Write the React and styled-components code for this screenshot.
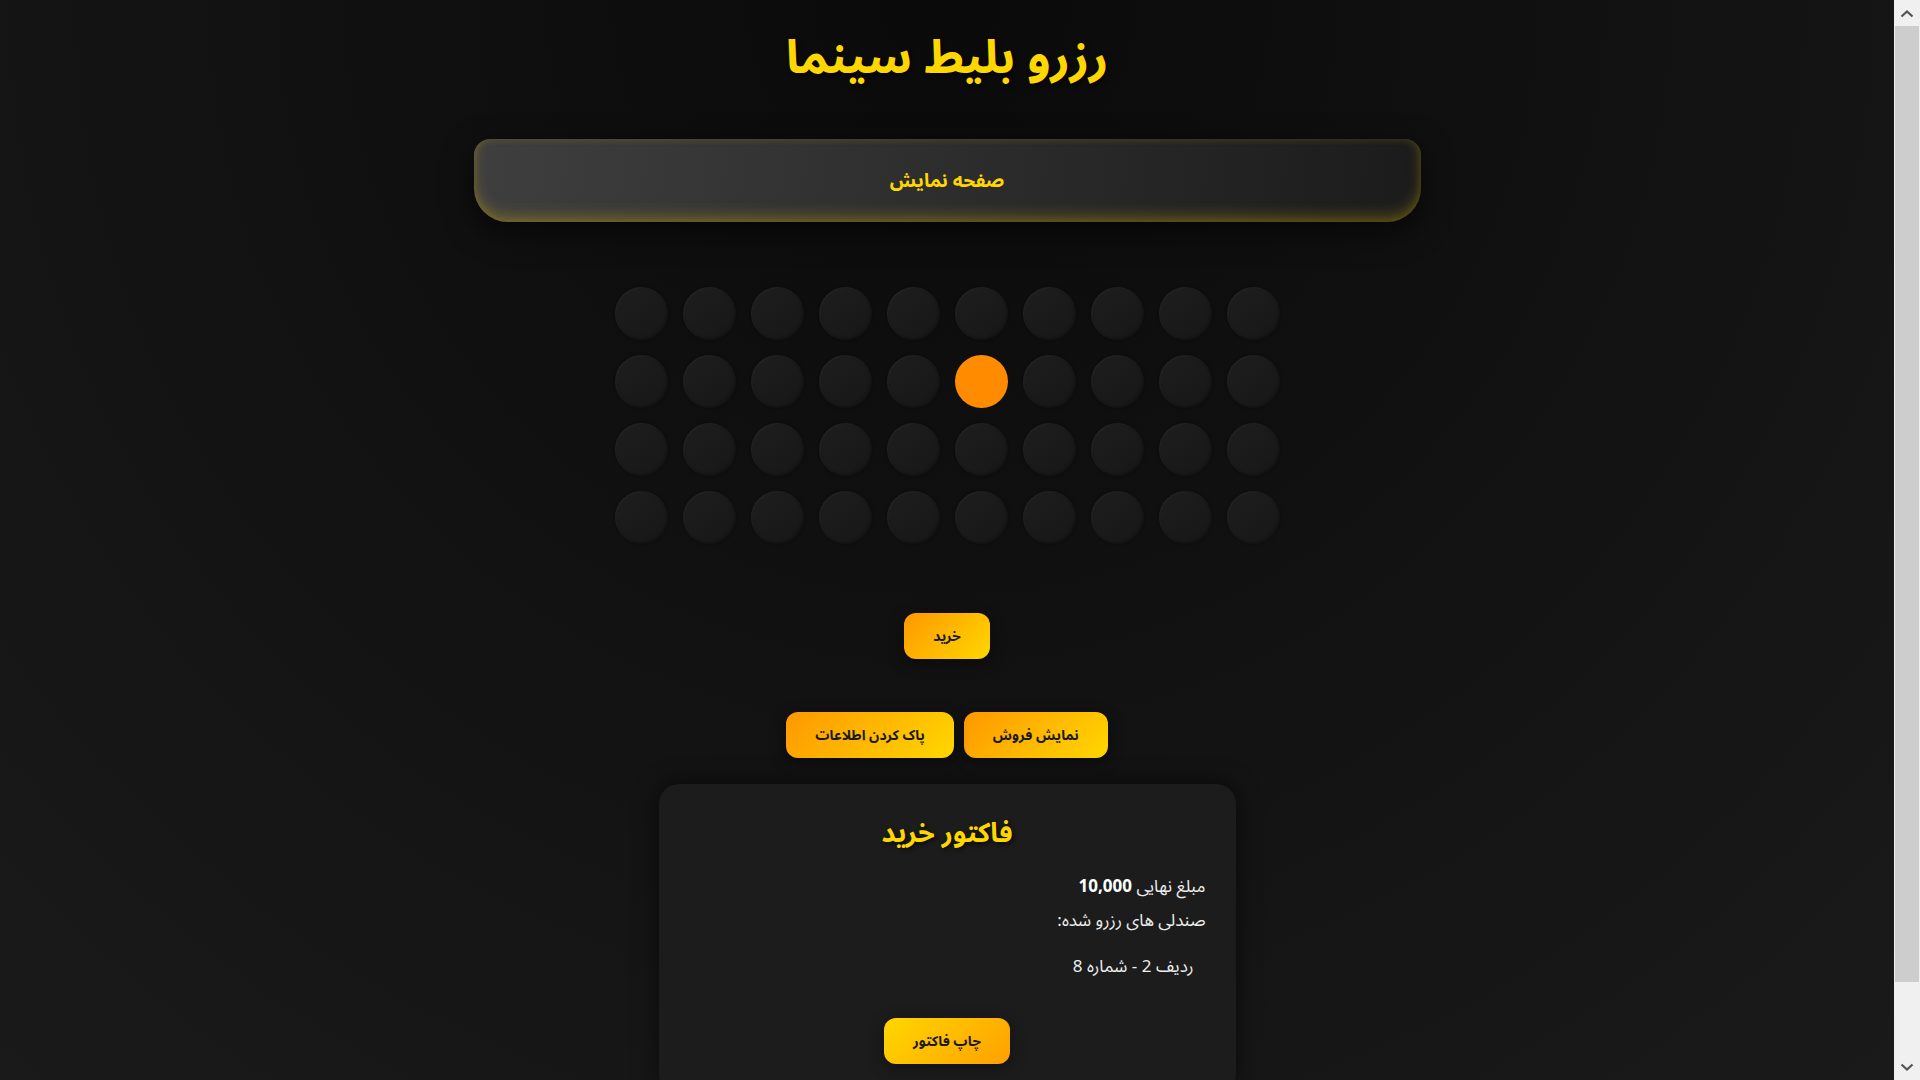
import React from 'react';
import styled, { createGlobalStyle } from 'styled-components';

const GlobalStyle = createGlobalStyle`
  html, body {
    margin: 0;
    padding: 0;
  }
  body {
    min-height: 100vh;
    background: radial-gradient(circle at 49% 0%, #0a0a0a 0%, #1b1b1b 100%);
    background-color: #1b1b1b;
    font-family: "Noto Sans Arabic", "Vazirmatn", "DejaVu Sans", sans-serif;
    color: #eeeeee;
    direction: rtl;
  }
`;

const Page = styled.div`
  margin-right: 26px;
  display: flex;
  flex-direction: column;
  align-items: center;
  padding: 29px 0 70px;
`;

const Title = styled.h1`
  margin: 0;
  font-size: 47px;
  line-height: 58px;
  font-weight: 700;
  color: #ffd700;
  text-shadow: 2px 2px 4px rgba(0, 0, 0, 0.6);
`;

const Screen = styled.div`
  width: 50%;
  height: 83px;
  margin-top: 52px;
  display: flex;
  align-items: center;
  justify-content: center;
  border-radius: 16px 16px 34px 34px;
  background: linear-gradient(100deg, #3f3f3f 0%, #2d2d2d 50%, #1b1b1b 100%);
  box-shadow:
    inset 0 -7px 14px rgba(255, 215, 0, 0.22),
    inset 0 0 9px rgba(255, 215, 0, 0.14),
    0 10px 30px rgba(0, 0, 0, 0.6);
  color: #ffd700;
  font-size: 19px;
  font-weight: 700;
`;

const SeatGrid = styled.div`
  margin-top: 65px;
  display: grid;
  grid-template-columns: repeat(10, 53px);
  grid-auto-rows: 53px;
  gap: 15px;
`;

const Seat = styled.div`
  border-radius: 50%;
  background: ${(p) => (p.$selected ? '#ff8c00' : 'linear-gradient(145deg, #1e1e1e, #171717)')};
  box-shadow: ${(p) =>
    p.$selected
      ? 'none'
      : 'inset 1px 1px 2px rgba(255, 255, 255, 0.04), inset -1px -1px 3px rgba(0, 0, 0, 0.35), 0 0 3px rgba(0, 0, 0, 0.3)'};
`;

const Button = styled.button`
  height: 46px;
  padding: 0 29px;
  border: none;
  border-radius: 12px;
  font-family: inherit;
  font-size: 14px;
  font-weight: 700;
  color: #1a1a1a;
  background: ${(p) =>
    p.$reverse
      ? 'linear-gradient(135deg, #ffd700 0%, #ffa000 100%)'
      : 'linear-gradient(135deg, #ff9800 0%, #ffd700 100%)'};
  box-shadow: 0 4px 15px rgba(0, 0, 0, 0.45);
  cursor: pointer;
`;

const BuyRow = styled.div`
  margin-top: 69px;
`;

const ActionRow = styled.div`
  margin-top: 53px;
  display: flex;
  gap: 10px;
`;

const Invoice = styled.div`
  width: 577px;
  box-sizing: border-box;
  margin-top: 26px;
  padding: 30px;
  border-radius: 20px;
  background: #1c1c1c;
  box-shadow: 0 0 25px rgba(0, 0, 0, 0.55);
  display: flex;
  flex-direction: column;
`;

const InvoiceTitle = styled.h2`
  margin: 0;
  text-align: center;
  font-size: 27px;
  line-height: 40px;
  font-weight: 700;
  color: #ffd700;
  text-shadow: 2px 2px 4px rgba(0, 0, 0, 0.6);
`;

const Line = styled.p`
  margin: ${(p) => p.$gap || 0}px 0 0;
  font-size: 17px;
  line-height: 28px;
  color: #eeeeee;

  strong {
    font-weight: 700;
    color: #ffffff;
  }
`;

const SeatList = styled.ul`
  list-style: none;
  margin: 18px 0 0;
  padding: 0 12px 0 0;
`;

const SeatItem = styled.li`
  font-size: 17px;
  line-height: 28px;
  color: #eeeeee;
`;

const PrintRow = styled.div`
  margin-top: 37px;
  display: flex;
  justify-content: center;
`;

// the window's scroll bar as it shows in the picture
const ScrollBar = styled.div`
  position: fixed;
  top: 0;
  right: 0;
  bottom: 0;
  width: 26px;
  background: #f0f0f0;
  display: flex;
  flex-direction: column;
  direction: ltr;
`;

const ScrollArrow = styled.div`
  height: 26px;
  flex: none;
  display: flex;
  align-items: center;
  justify-content: center;
`;

const ScrollTrack = styled.div`
  flex: 1;
  display: flex;
  flex-direction: column;
`;

const ScrollThumb = styled.div`
  height: 93%;
  margin: 0 1px;
  background: #cdcdcd;
`;

const Chevron = ({ up }) => (
  <svg width="14" height="9" viewBox="0 0 14 9">
    <path
      d={up ? 'M1.5 7.5 L7 2.5 L12.5 7.5' : 'M1.5 1.5 L7 6.5 L12.5 1.5'}
      fill="none"
      stroke="#555"
      strokeWidth="2.2"
    />
  </svg>
);

const ROWS = 4;
const COLS = 10;
// grid flows right to left, so the 6th seat from the left is index 4
const selected = { row: 1, col: 4 };

export default function App() {
  const seats = [];
  for (let r = 0; r < ROWS; r++) {
    for (let c = 0; c < COLS; c++) {
      seats.push(
        <Seat key={`${r}-${c}`} $selected={r === selected.row && c === selected.col} />
      );
    }
  }

  return (
    <>
      <GlobalStyle />
      <Page>
        <Title>رزرو بلیط سینما</Title>
        <Screen>صفحه نمایش</Screen>
        <SeatGrid>{seats}</SeatGrid>
        <BuyRow>
          <Button>خرید</Button>
        </BuyRow>
        <ActionRow>
          <Button>نمایش فروش</Button>
          <Button>پاک کردن اطلاعات</Button>
        </ActionRow>
        <Invoice>
          <InvoiceTitle>فاکتور خرید</InvoiceTitle>
          <Line $gap={19}>
            مبلغ نهایی <strong>10,000</strong>
          </Line>
          <Line $gap={6}>صندلی های رزرو شده:</Line>
          <SeatList>
            <SeatItem>ردیف 2 - شماره 8</SeatItem>
          </SeatList>
          <PrintRow>
            <Button $reverse>چاپ فاکتور</Button>
          </PrintRow>
        </Invoice>
      </Page>
      <ScrollBar>
        <ScrollArrow>
          <Chevron up />
        </ScrollArrow>
        <ScrollTrack>
          <ScrollThumb />
        </ScrollTrack>
        <ScrollArrow>
          <Chevron />
        </ScrollArrow>
      </ScrollBar>
    </>
  );
}
